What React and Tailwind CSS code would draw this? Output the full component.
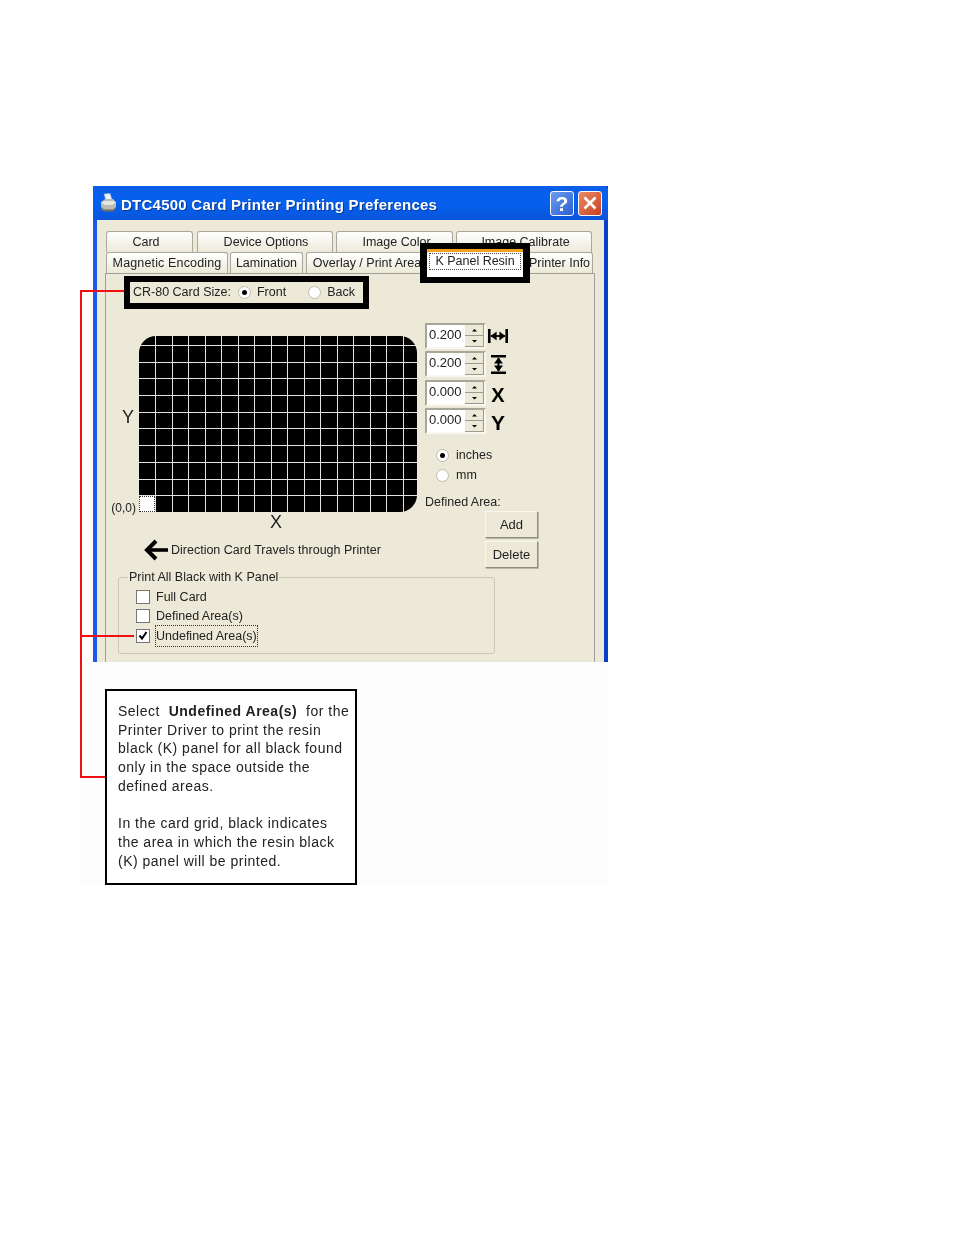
const rowOne = [
    { label: "Card", width: "w-[87px]", extra: "pr-[7px]" },
    { label: "Device Options", width: "w-[136px]", extra: "pl-[2px]" },
    { label: "Image Color", width: "w-[117px]", extra: "pl-[4px]" },
    { label: "Image Calibrate", width: "w-[136px]", extra: "pl-[3px]" },
];

const rowTwo = [
    { label: "Magnetic Encoding", width: "w-[122px]", extra: "tracking-[0.15px]" },
    { label: "Lamination", width: "w-[73px]" },
    { label: "Overlay / Print Area", width: "w-[120px]", extra: "pl-[2px]" },
];

const spinners = [
    { value: "0.200", icon: <WidthIcon />, gap: "" },
    { value: "0.200", icon: <HeightIcon />, gap: "mt-[2px]" },
    { value: "0.000", icon: <span className="pt-[4px] text-[20px] leading-none font-bold text-black">X</span>, gap: "mt-[3px]" },
    { value: "0.000", icon: <span className="pt-[3px] text-[21px] leading-none font-bold text-black">Y</span>, gap: "mt-[2px]" },
];

const gridCells = Array.from({ length: 11 * 17 }, (_, i) => i);

function WidthIcon() {
    return (
        <svg width="20" height="14" viewBox="0 0 20 14" fill="none" stroke="#000">
            <path d="M1.300 0v14M18.700 0v14" strokeWidth="2.600" />
            <path d="M3 7h14" strokeWidth="1.800" />
            <path d="M2.600 7l6-4.500v9zM17.400 7l-6-4.500v9z" fill="#000" stroke="none" />
        </svg>
    );
}

function HeightIcon() {
    return (
        <svg width="15" height="19" viewBox="0 0 15 19" fill="none" stroke="#000">
            <path d="M0 1.300h15M0 17.700h15" strokeWidth="2.600" />
            <path d="M7.500 3v13" strokeWidth="2" />
            <path d="M7.500 2.600l-4.500 6h9zM7.500 16.400l-4.500-6h9z" fill="#000" stroke="none" />
        </svg>
    );
}

function PrinterIcon() {
    return (
        <svg width="19" height="20" viewBox="0 0 19 20">
            <path d="M5 1l6-0.500 2 6-6 1z" fill="#eef2fa" stroke="#a8b4cc" strokeWidth="0.600" />
            <path d="M2 9l4-3h8l3 3v6l-3 3H5l-3-2z" fill="#b9bcb6" />
            <path d="M2 9.500l4-1.500h8l3 1.500-4 2.500H6z" fill="#e6e6e0" />
            <path d="M2 14l3 2.500h9l3-2.500v2l-3 2.500H5l-3-2.500z" fill="#6d7068" />
        </svg>
    );
}

function Radio({ checked }) {
    return (
        <span className="flex h-[13px] w-[13px] shrink-0 items-center justify-center rounded-full border border-[#bcbcac] bg-white">
            {checked && <span className="h-[5px] w-[5px] rounded-full bg-black" />}
        </span>
    );
}

function Checkbox({ checked }) {
    return (
        <span className="flex h-[14px] w-[14px] shrink-0 items-center justify-center border border-[#77776f] bg-white">
            {checked && (
                <svg width="10" height="10" viewBox="0 0 10 10" fill="none" stroke="#000" strokeWidth="2">
                    <path d="M1.500 4.500l2.500 3 4.500-6.500" />
                </svg>
            )}
        </span>
    );
}

function Tab({ label, width, extra = "" }) {
    return (
        <div className={`${width} ${extra} flex h-[21px] items-center justify-center rounded-t-[3px] border border-b-0 border-[#a8a89c] bg-gradient-to-b from-white to-[#ece9d8] pt-[1px] text-[12.500px] whitespace-nowrap text-[#222]`}>
            {label}
        </div>
    );
}

function Spinner({ value, icon, gap }) {
    return (
        <div className={`${gap} flex items-center`}>
            <div className="flex h-[26px] w-[61px] border-2 border-t-[#a8a797] border-r-[#f8f7f0] border-b-[#f8f7f0] border-l-[#a8a797] bg-white">
                <span className="flex-1 pl-[2px] text-[13px] leading-[20px] text-[#222]">{value}</span>
                <div className="flex w-[19px] flex-col">
                    <SpinButton path="M2 3.500h5L4.500 1z" />
                    <SpinButton path="M2 1h5L4.500 3.500z" />
                </div>
            </div>
            <div className="flex w-[24px] justify-center">{icon}</div>
        </div>
    );
}

function SpinButton({ path }) {
    return (
        <span className="flex flex-1 items-center justify-center border-r border-b border-[#9d9c8c] bg-[#ece9d8]">
            <svg width="9" height="5" viewBox="0 0 9 5" fill="#000">
                <path d={path} />
            </svg>
        </span>
    );
}

function PushButton({ label }) {
    return (
        <div className="flex h-[27px] w-[53px] items-center justify-center border border-t-[#f8f7f0] border-r-[#8f8e7e] border-b-[#8f8e7e] border-l-[#f8f7f0] bg-[#ece9d8] text-[13px] text-[#222] shadow-[1px_1px_0_#b8b7a6]">
            {label}
        </div>
    );
}

function CheckRow({ checked, label, focused }) {
    return (
        <div className="flex h-[19.500px] items-center gap-[5px]">
            <Checkbox checked={checked} />
            <span className={`pt-[1px] text-[12.500px] text-[#222] ${focused ? "border border-dotted border-[#333]" : "border border-transparent"}`}>
                {label}
            </span>
        </div>
    );
}

export default function App() {
    return (
        <div className="relative h-[1235px] w-[954px] overflow-hidden bg-white pt-[186px] pl-[80px] font-['Liberation_Sans',Arial,sans-serif] blur-[0.35px]">
            <div className="w-[528px]">
                {/* dialog */}
                <div className="ml-[13px] flex h-[476px] w-[515px] flex-col border-x-4 border-r-[#0b3ec8] border-l-[#1a5ae8]">
                    <div className="-mx-[4px] flex h-[34px] shrink-0 items-center rounded-t-[4px] bg-gradient-to-b from-[#0a5ee8] via-[#0560ee] to-[#0a55dc] pr-[6px] pl-[6px]">
                        <PrinterIcon />
                        <span className="mt-[4px] ml-[3px] flex-1 text-[15px] font-bold tracking-[0.25px] whitespace-nowrap text-white [text-shadow:1px_1px_0_#0a3a9c]">
                            DTC4500 Card Printer Printing Preferences
                        </span>
                        <div className="flex h-[25px] w-[24px] items-center justify-center rounded-[3px] border border-white bg-gradient-to-br from-[#6d9cf0] to-[#2a5fd0] text-[21px] leading-none font-bold text-white">
                            ?
                        </div>
                        <div className="ml-[4px] flex h-[25px] w-[24px] items-center justify-center rounded-[3px] border border-white bg-gradient-to-br from-[#ea8a68] to-[#c83c18]">
                            <svg width="14" height="14" viewBox="0 0 14 14" stroke="#fff" strokeWidth="2.600">
                                <path d="M1.500 1.500l11 11M12.500 1.500l-11 11" />
                            </svg>
                        </div>
                    </div>

                    <div className="flex min-h-0 flex-1 flex-col bg-[#ece9d8] pt-[11px]">
                        <div className="flex pl-[9px]">
                            {rowOne.map((tab, i) => (
                                <div key={tab.label} className={i === 0 ? "" : i === 1 ? "ml-[4px]" : "ml-[3px]"}>
                                    <Tab {...tab} />
                                </div>
                            ))}
                        </div>
                        <div className="relative flex pl-[9px]">
                            <Tab {...rowTwo[0]} />
                            <div className="ml-[2px]"><Tab {...rowTwo[1]} /></div>
                            <div className="ml-[3px]"><Tab {...rowTwo[2]} /></div>
                            <div className="ml-[2px] h-[21px] w-[98px]" />
                            <div className="w-[67px]"><Tab label="Printer Info" width="w-[67px]" /></div>
                            {/* selected tab with its highlight box on top */}
                            <div className="absolute top-[-9px] left-[323px] z-10 flex h-[40px] w-[110px] flex-col border-x-[7px] border-t-[6px] border-b-[6px] border-black bg-white">
                                <div className="h-[3px] shrink-0 bg-[#f2a020]" />
                                <div className="mx-[2px] mt-[1px] flex h-[17px] items-center justify-center border border-dotted border-[#444] text-[12.500px] whitespace-nowrap text-[#222]">
                                    K Panel Resin
                                </div>
                            </div>
                        </div>

                        <div className="mr-[9px] ml-[8px] min-h-0 flex-1 border-x border-t border-[#9fa09a] text-[12.500px] text-[#222]">
                            <div className="mt-[2px] ml-[18px] flex h-[33px] w-[245px] items-center border-[6px] border-black pl-[3px] whitespace-nowrap">
                                <span>CR-80 Card Size:</span>
                                <span className="ml-[7px]"><Radio checked /></span>
                                <span className="ml-[6px]">Front</span>
                                <span className="ml-[22px]"><Radio /></span>
                                <span className="ml-[6px]">Back</span>
                            </div>

                            <div className="mt-[14px] flex h-[246px]">
                                <div className="w-[319px] pt-[13px]">
                                    <div className="flex">
                                        <div className="flex h-[176px] w-[33px] flex-col items-end">
                                            <span className="mt-[69px] pr-[5px] text-[18px] leading-[24px]">Y</span>
                                            <span className="mt-auto -mb-[4px] pr-[3px] text-[12px] leading-[16px] whitespace-nowrap">(0,0)</span>
                                        </div>
                                        <div className="grid h-[176px] w-[278px] grid-cols-[16px_repeat(15,15.5px)_13.5px] grid-rows-[9px_repeat(10,15.7px)] gap-px overflow-hidden rounded-t-[17px] rounded-br-[17px] bg-[#e2e2e2]">
                                            {gridCells.map((i) =>
                                                i === 170 ? (
                                                    <div key={i} className="border border-dotted border-[#333] bg-white" />
                                                ) : (
                                                    <div key={i} className="bg-black" />
                                                )
                                            )}
                                        </div>
                                    </div>
                                    <div className="ml-[31px] w-[278px] text-center text-[18px] leading-[20px]">X</div>
                                    <div className="mt-[7px] ml-[37px] flex items-center">
                                        <svg width="27" height="22" viewBox="0 0 27 22" fill="none" stroke="#000">
                                            <path d="M4 11h21" strokeWidth="3.600" />
                                            <path d="M13 2l-9 9 9 9" strokeWidth="4" />
                                        </svg>
                                        <span className="ml-[1px] whitespace-nowrap">Direction Card Travels through Printer</span>
                                    </div>
                                </div>

                                <div className="flex w-[115px] flex-col">
                                    <div className="flex flex-col">
                                        {spinners.map((s, i) => (
                                            <Spinner key={i} value={s.value} icon={s.icon} gap={s.gap} />
                                        ))}
                                    </div>
                                    <div className="mt-[11px] ml-[11px] flex h-[20px] items-center gap-[7px]"><Radio checked /> inches</div>
                                    <div className="ml-[11px] flex h-[20px] items-center gap-[7px]"><Radio /> mm</div>
                                    <div className="mt-[8px] leading-[18px] whitespace-nowrap">Defined Area:</div>
                                    <div className="ml-[60px] flex flex-col gap-[3px]">
                                        <PushButton label="Add" />
                                        <PushButton label="Delete" />
                                    </div>
                                </div>
                            </div>

                            <fieldset className="ml-[12px] h-[85px] w-[377px] rounded-[3px] border border-[#c9c8b6] pl-[17px]">
                                <legend className="ml-[-8px] px-[1px] text-[12.500px] leading-[16px]">Print All Black with K Panel</legend>
                                <div className="mt-[2px]">
                                    <CheckRow label="Full Card" />
                                    <CheckRow label="Defined Area(s)" />
                                    <CheckRow label="Undefined Area(s)" checked focused />
                                </div>
                            </fieldset>
                        </div>
                    </div>
                </div>

                {/* note under the dialog */}
                <div className="h-[223px] bg-[#fdfdfd] pt-[27px] pl-[25px]">
                    <div className="h-[196px] w-[252px] border-2 border-black bg-white pt-[11px] pl-[11px] text-[14px] leading-[18.700px] tracking-[0.5px] whitespace-nowrap text-[#222]">
                        Select&nbsp; <b>Undefined Area(s)</b>&nbsp; for the<br />
                        Printer Driver to print the resin<br />
                        black (K) panel for all black found<br />
                        only in the space outside the<br />
                        defined areas.<br />
                        <br />
                        In the card grid, black indicates<br />
                        the area in which the resin black<br />
                        (K) panel will be printed.
                    </div>
                </div>
            </div>

            {/* red leader lines */}
            <div className="absolute top-[290px] left-[80px] h-[488px] w-[2px] bg-[#f01010]" />
            <div className="absolute top-[290px] left-[80px] h-[2px] w-[44px] bg-[#f01010]" />
            <div className="absolute top-[635px] left-[80px] h-[2px] w-[54px] bg-[#f01010]" />
            <div className="absolute top-[776px] left-[80px] h-[2px] w-[25px] bg-[#f01010]" />
        </div>
    );
}
